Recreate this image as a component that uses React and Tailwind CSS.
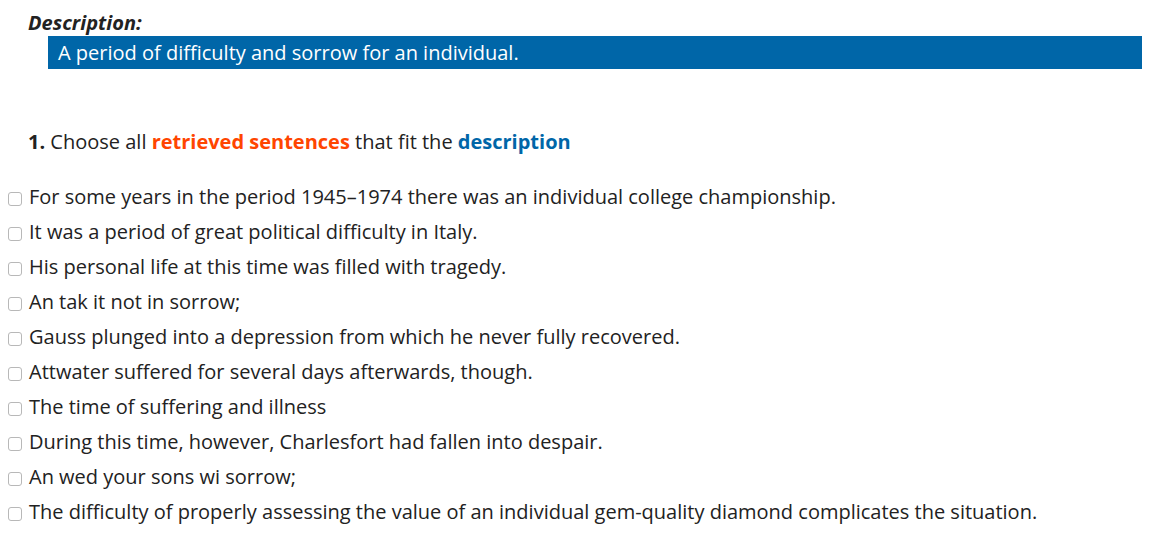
import { useState } from "react";

const sentences = [
  "For some years in the period 1945–1974 there was an individual college championship.",
  "It was a period of great political difficulty in Italy.",
  "His personal life at this time was filled with tragedy.",
  "An tak it not in sorrow;",
  "Gauss plunged into a depression from which he never fully recovered.",
  "Attwater suffered for several days afterwards, though.",
  "The time of suffering and illness",
  "During this time, however, Charlesfort had fallen into despair.",
  "An wed your sons wi sorrow;",
  "The difficulty of properly assessing the value of an individual gem-quality diamond complicates the situation.",
];

export default function App() {
  const [checked, setChecked] = useState({});

  return (
    <div className="min-h-screen bg-white text-[#222] font-['Open_Sans',sans-serif] text-[20px]">
      {/* Description */}
      <div className="pl-[28px] pr-[19px] pt-[9px]">
        <div className="font-bold italic leading-[27px]">Description:</div>
        <div className="ml-[20px] bg-[#0066a8] text-white h-[33px] px-[10px] flex items-center leading-none">
          A period of difficulty and sorrow for an individual.
        </div>
      </div>

      {/* Question */}
      <div className="pl-[28px] mt-[59px] leading-[27px]">
        <span className="font-bold">1.</span> Choose all{" "}
        <span className="font-bold text-[#ff4500]">retrieved sentences</span> that fit the{" "}
        <span className="font-bold text-[#0066a8]">description</span>
      </div>

      {/* Options */}
      <div className="mt-[24px] pl-[8px] flex flex-col">
        {sentences.map((s, i) => (
          <label key={i} className="flex items-center h-[35px] cursor-pointer">
            <input
              type="checkbox"
              checked={!!checked[i]}
              onChange={() => setChecked({ ...checked, [i]: !checked[i] })}
              className="appearance-none w-[14px] h-[14px] border border-[#b8b8b8] rounded-[3px] bg-white mr-[7px] mt-[4px] shrink-0"
            />
            <span className="leading-[27px]">{s}</span>
          </label>
        ))}
      </div>
    </div>
  );
}
